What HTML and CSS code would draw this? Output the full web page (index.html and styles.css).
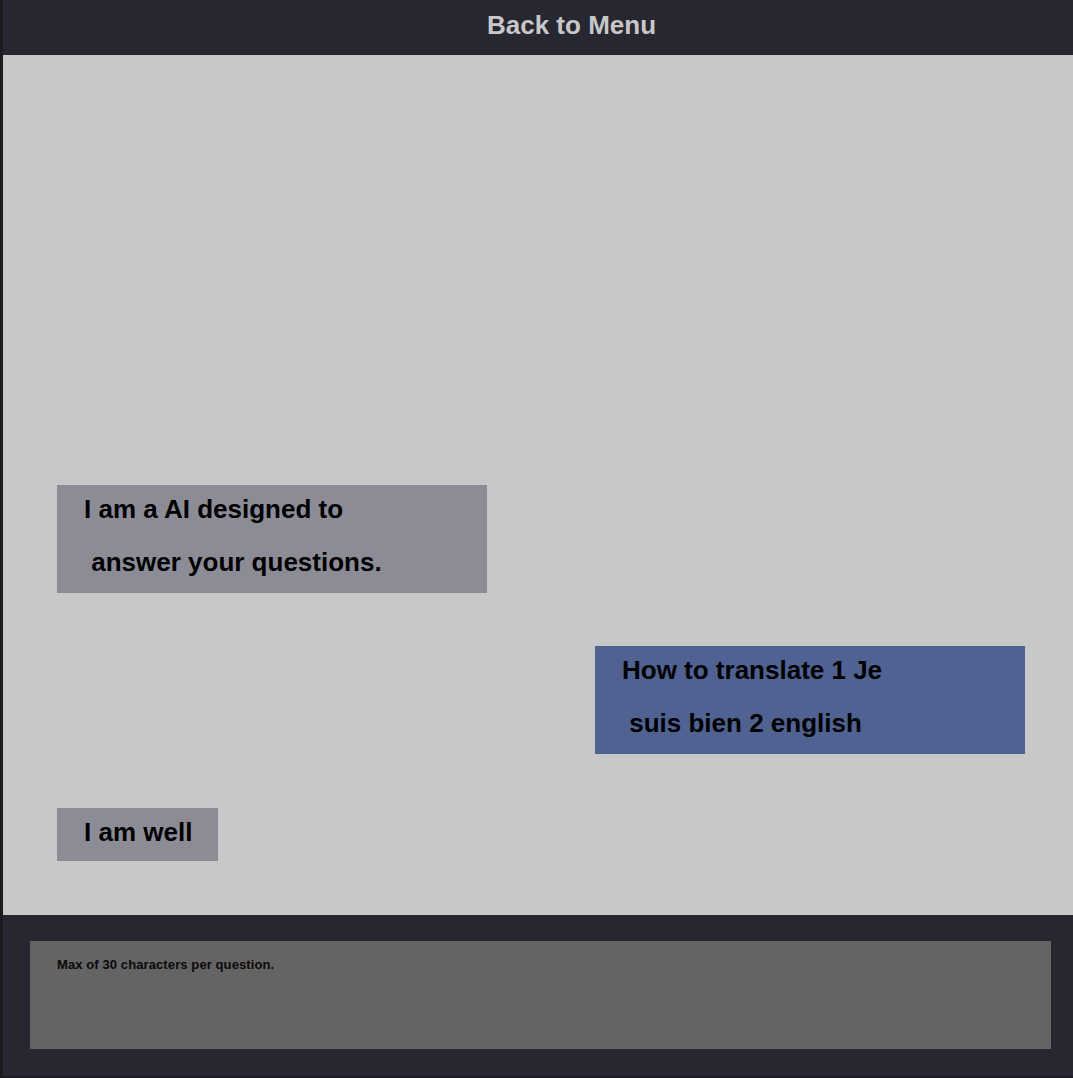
FILE: index.html
```html
<!DOCTYPE html>
<html lang="en">
<head>
<meta charset="utf-8">
<title>Chat</title>
<link rel="stylesheet" href="styles.css">
</head>
<body>
<div class="app">
  <header class="topbar">
    <span class="back">Back to Menu</span>
  </header>
  <main class="chat">
    <div class="msg bot">
      <span class="line">I am a AI designed to</span>
      <span class="line"> answer your questions.</span>
    </div>
    <div class="msg user">
      <span class="line">How to translate 1 Je</span>
      <span class="line"> suis bien 2 english</span>
    </div>
    <div class="msg bot short">
      <span class="line">I am well</span>
    </div>
  </main>
  <footer class="composer">
    <div class="input">Max of 30 characters per question.</div>
  </footer>
</div>
</body>
</html>
```
FILE: styles.css
```css
html, body {
  margin: 0;
  padding: 0;
  background: #1c1c20;
}

.app {
  box-sizing: border-box;
  height: 1078px;
  border-left: 3px solid #1c1c20;
  border-bottom: 2px solid #1c1c20;
  display: flex;
  flex-direction: column;
  font-family: "Liberation Sans", Arial, sans-serif;
}

.topbar {
  box-sizing: border-box;
  height: 55px;
  flex: none;
  background: #272731;
  padding: 10px 0 0 67px;
  text-align: center;
}

.back {
  color: #c8c8c8;
  font-weight: bold;
  font-size: 26px;
  line-height: 30px;
}

.chat {
  flex: 1;
  background: #c8c8c8;
  display: flex;
  flex-direction: column;
  justify-content: flex-end;
  gap: 53px;
  padding: 0 48px 54px 54px;
}

.msg {
  box-sizing: border-box;
  width: 430px;
  padding: 0 26px 7px 27px;
  display: flex;
  flex-direction: column;
  gap: 5px;
  color: #000;
  font-weight: bold;
  font-size: 26px;
}

.msg .line {
  display: block;
  line-height: 48px;
  white-space: pre;
}

.bot {
  align-self: flex-start;
  background: #8c8c96;
}

.user {
  align-self: flex-end;
  background: #4f6292;
}

.short {
  width: auto;
  margin-top: 1px;
  padding-bottom: 5px;
}

.composer {
  box-sizing: border-box;
  height: 161px;
  flex: none;
  background: #272731;
  padding: 26px 22px 27px 27px;
}

.input {
  box-sizing: border-box;
  height: 108px;
  background: #646464;
  padding: 16px 27px;
  color: #0a0a0a;
  font-weight: bold;
  font-size: 13px;
  line-height: 15px;
  letter-spacing: 0.1px;
}
```
